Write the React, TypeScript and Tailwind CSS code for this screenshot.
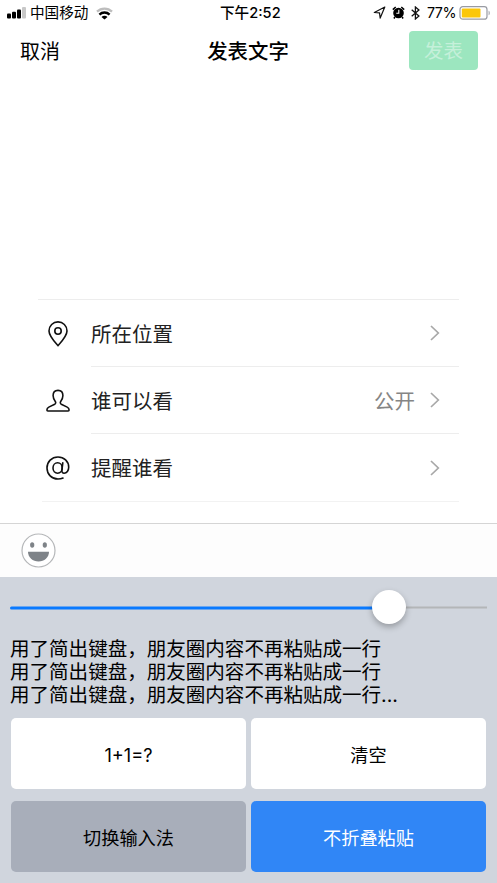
import type { ReactNode } from 'react';

const PinIcon = () => (
    <svg width="22" height="28" viewBox="0 0 22 28" fill="none" stroke="#111" strokeWidth="1.6">
        <path d="M11 25.6C7.2 21.3 2 15.8 2 10.9a9 9 0 0 1 18 0c0 4.9-5.2 10.4-9 14.7z" strokeLinejoin="round" />
        <circle cx="11" cy="11" r="3.2" />
    </svg>
);

const PersonIcon = () => (
    <svg width="26" height="26" viewBox="0 0 26 26" fill="none" stroke="#111" strokeWidth="1.6" strokeLinejoin="round">
        <path d="M13 2.4c-3 0-4.9 2.2-4.9 5.2 0 2.3 1 4.4 2.2 5.9.7.9.5 2.1-.6 2.7l-5.900 2.900c-1.500.7-1.900 1.600-1.900 2.900 0 .7.4 1 1 1h20.200c.6 0 1-.3 1-1 0-1.300-.4-2.200-1.900-2.900l-5.900-2.900c-1.100-.6-1.300-1.800-.6-2.700 1.200-1.500 2.200-3.600 2.200-5.900 0-3-1.900-5.200-4.900-5.200z" />
    </svg>
);

const AtIcon = () => (
    <svg width="26" height="26" viewBox="0 0 26 26" fill="none" stroke="#111" strokeWidth="1.6" strokeLinecap="round">
        <ellipse cx="12.6" cy="13" rx="4.6" ry="5.2" />
        <path d="M17.8 7.8l-.9 7.3c-.2 1.9.6 3.1 2.2 3.1 2.7 0 4.6-2.8 4.6-6C23.7 6.3 19 2 13 2 6.7 2 2 6.7 2 13s4.7 11 11 11c1.9 0 3.5-.3 5-1" />
    </svg>
);

const Chevron = () => (
    <svg width="10" height="16" viewBox="0 0 10 16" fill="none" stroke="#a8a8a8" strokeWidth="1.7">
        <path d="M1 1l7.3 7L1 15" />
    </svg>
);

const StatusBar = () => (
    <div className="relative flex h-[26px] items-center justify-between pl-[7px] pr-[6px] text-[14.6px] leading-none">
        <div className="flex items-center">
            <svg width="20" height="12" viewBox="0 0 20 12">
                <rect x="0" y="6.5" width="4" height="5" rx="1" />
                <rect x="5" y="4.7" width="4" height="6.8" rx="1" />
                <rect x="10" y="2.5" width="4" height="9" rx="1" />
                <rect x="15" y="0" width="4" height="11.5" rx="1" fill="#c8c8c8" />
            </svg>
            <span className="ml-[3px] pt-px">中国移动</span>
            <svg className="ml-[8px]" width="17" height="13" viewBox="0 0 17 13" fill="none" strokeWidth="2.3">
                <path d="M1 4.6a10.8 10.8 0 0 1 15 0" stroke="#bdbdbd" />
                <path d="M3.4 7.6a7.2 7.2 0 0 1 10.2 0" stroke="#000" />
                <path d="M8.5 12.6L5.5 9.9a4.2 4.2 0 0 1 6 0z" fill="#000" />
            </svg>
        </div>
        <span className="absolute left-[220px] pt-px font-medium">下午2:52</span>
        <div className="flex items-center">
            <svg width="13" height="13" viewBox="0 0 13 13" fill="none" stroke="#111" strokeWidth="1.2" strokeLinejoin="round">
                <path d="M11.8 1L1.3 6.5l5.2.4.7 5.2z" />
            </svg>
            <svg className="ml-[6px]" width="13" height="13" viewBox="0 0 13 13">
                <circle cx="6.5" cy="7" r="5.3" />
                <path d="M.8 3.6L3.7 1M12.2 3.6L9.3 1M2.9 11l-1 1.5M10.1 11l1 1.5" stroke="#000" strokeWidth="1.5" />
                <path d="M6.8 3.8v3.4H4.3" fill="none" stroke="#fff" strokeWidth="1.1" />
            </svg>
            <svg className="ml-[6px]" width="9" height="14" viewBox="0 0 9 14" fill="none" stroke="#111" strokeWidth="1.3">
                <path d="M.7 3.8l7.2 6.3L4.4 13V1l3.5 2.9L.7 10.2" />
            </svg>
            <span className="ml-[7px] w-[29px] whitespace-nowrap pt-px text-[14.3px] tracking-[-0.5px]">77%</span>
            <svg className="ml-[3px]" width="32" height="14" viewBox="0 0 32 14">
                <rect x="1" y=".7" width="27" height="12.5" rx="2.8" fill="#fff" stroke="#999ba3" strokeWidth="1.2" />
                <rect x="2.8" y="2.5" width="18.7" height="9" rx="1" fill="#fbc70a" />
                <path d="M29.6 4.7c1.5.5 1.5 4 0 4.500z" fill="#999ba3" />
            </svg>
        </div>
    </div>
);

interface RowProps {
    icon: ReactNode;
    label: string;
    value?: string;
    last?: boolean;
}

const OptionRow = ({ icon, label, value, last }: RowProps) => (
    <div className="flex h-[67px]">
        <div className="flex w-[53px] items-center justify-center pr-[14px]">{icon}</div>
        <div className={`flex flex-1 items-center pr-[19px] ${last ? '' : 'border-b border-[#ededed]'}`}>
            <span className="pt-[4px] text-[20.5px] text-[#222]">{label}</span>
            <span className="ml-auto mr-[15px] pt-[4px] text-[20.5px] text-[#858585]">{value}</span>
            <Chevron />
        </div>
    </div>
);

const Slider = () => (
    <div className="relative mt-[13px] flex h-[34px] items-center">
        <div className="flex h-[3px] w-full translate-y-[0.5px] items-center">
            <div className="h-[3px] w-[379px] rounded-full bg-[#0a7aff]" />
            <div className="h-[2px] flex-1 bg-[#b3b6b8]" />
        </div>
        <div className="absolute left-[362px] top-0 h-[34px] w-[34px] rounded-full bg-white shadow-[0_3px_6px_rgba(0,0,0,0.28)]" />
    </div>
);

const lines = [
    '用了简出键盘\uff0c朋友圈内容不再粘贴成一行',
    '用了简出键盘\uff0c朋友圈内容不再粘贴成一行',
    '用了简出键盘\uff0c朋友圈内容不再粘贴成一行...',
];

const keys = [
    { label: '1+1=?', style: 'bg-white text-black' },
    { label: '清空', style: 'bg-white text-black' },
    { label: '切换输入法', style: 'bg-[#a8aeba] text-black' },
    { label: '不折叠粘贴', style: 'bg-[#3086f6] text-white' },
];

export default function App() {
    return (
        <div className="flex h-[883px] w-[497px] flex-col overflow-hidden bg-white font-[Inter,'Noto_Sans_CJK_SC',sans-serif] text-black">
            <StatusBar />

            <header className="grid h-[49px] grid-cols-3 items-center pl-[19px] pr-[19px]">
                <span className="pl-px pt-[2px] text-[20px]">取消</span>
                <h1 className="pr-px pt-[3px] text-center text-[20.4px] font-medium">发表文字</h1>
                <button className="flex h-[39px] w-[69px] items-center justify-center justify-self-end rounded-[4px] bg-[#9ce6bf] pt-[2px] text-[19.5px] text-[#c5f0da]">
                    发表
                </button>
            </header>

            <main className="flex h-[448px] flex-col justify-end pb-[21px] pl-[38px] pr-[38px]">
                <div className="border-t border-[#ededed]">
                    <OptionRow icon={<PinIcon />} label="所在位置" />
                    <OptionRow icon={<PersonIcon />} label="谁可以看" value="公开" />
                    <OptionRow icon={<AtIcon />} label="提醒谁看" last />
                </div>
                <div className="ml-[4px] h-px bg-[#f2f2f2]" />
            </main>

            {/* Barra de emoji */}
            <div className="flex h-[54px] items-center border-t border-[#d5d5d5] bg-[#fdfdfd] pb-px pl-[21px]">
                <svg width="35" height="35" viewBox="0 0 35 35">
                    <circle cx="17.5" cy="17.5" r="16.5" fill="#fff" stroke="#b5b7b9" strokeWidth="1.2" />
                    <ellipse cx="11.2" cy="12" rx="2.1" ry="2.8" fill="#7e8388" />
                    <ellipse cx="23.8" cy="12" rx="2.1" ry="2.8" fill="#7e8388" />
                    <path d="M7 18.8h21c0 5.8-4.7 9.7-10.5 9.7S7 24.6 7 18.8z" fill="#7e8388" />
                </svg>
            </div>

            {/* Teclado */}
            <section className="flex-1 bg-[#d0d5dd] px-[10px]">
                <Slider />
                <div className="mt-[14px] text-[19.55px] leading-[22.8px]">
                    {lines.map((line, index) => (
                        <p key={index} className="whitespace-nowrap">
                            {line}
                        </p>
                    ))}
                </div>
                <div className="mt-[12px] grid grid-cols-2 gap-x-[5px] gap-y-[12px] px-px">
                    {keys.map((key) => (
                        <button key={key.label} className={`h-[71px] rounded-[5px] pt-[3px] text-[18.2px] ${key.style}`}>
                            {key.label}
                        </button>
                    ))}
                </div>
            </section>
        </div>
    );
}
